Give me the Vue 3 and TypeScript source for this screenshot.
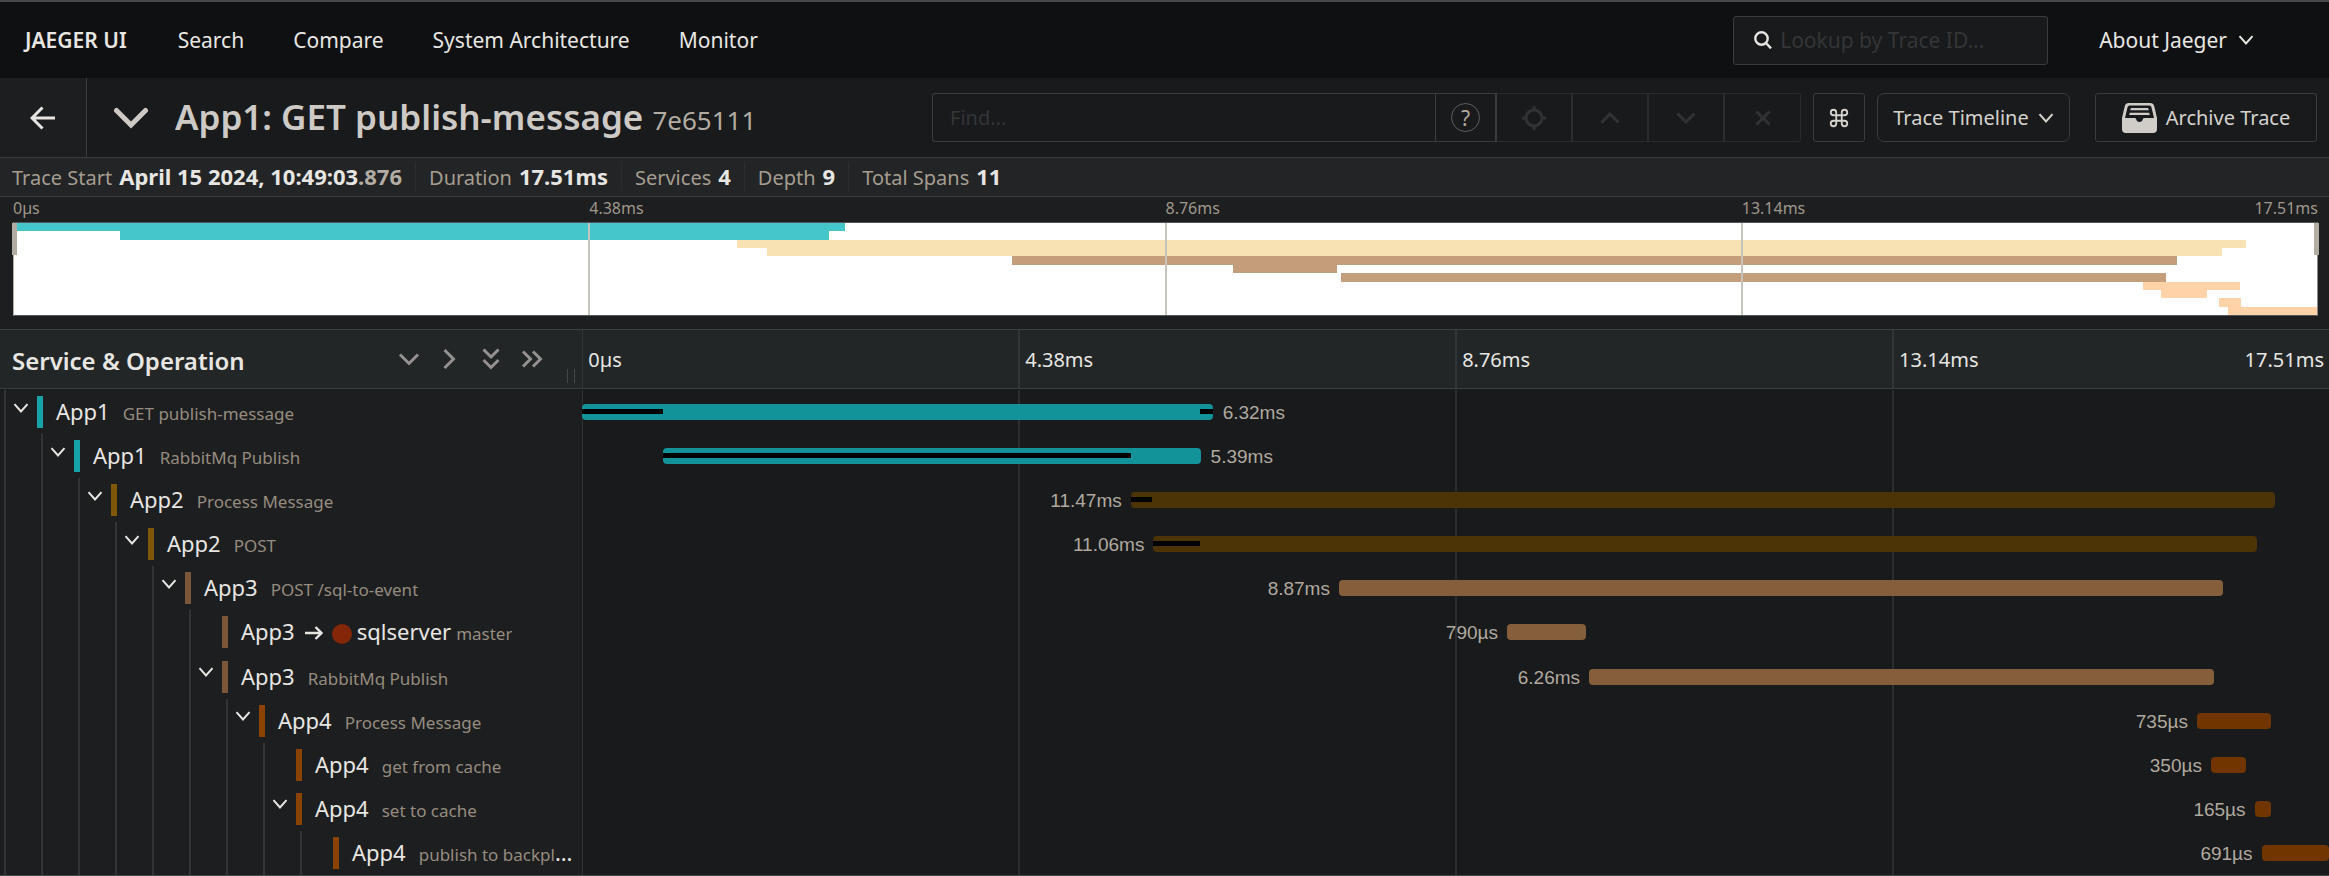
<script setup lang="ts">
interface Span {
  service: string
  operation: string
  depth: number
  hasChildren: boolean
  tone: 'teal' | 'gold' | 'tan' | 'rust'
  start: number
  width: number
  duration: string
  labelSide: 'left' | 'right'
  peer?: string
  critical: { start: number; width: number }[]
}

const menu = ['Search', 'Compare', 'System Architecture', 'Monitor']
const ticks = ['0µs', '4.38ms', '8.76ms', '13.14ms']
const total = '17.51ms'

const summary = [
  { label: 'Duration', value: '17.51ms' },
  { label: 'Services', value: '4' },
  { label: 'Depth', value: '9' },
  { label: 'Total Spans', value: '11' },
]

const spans: Span[] = [
  { service: 'App1', operation: 'GET publish-message', depth: 0, hasChildren: true, tone: 'teal', start: 0, width: 36.09, duration: '6.32ms', labelSide: 'right', critical: [{ start: 0, width: 4.6 }, { start: 35.35, width: 0.74 }] },
  { service: 'App1', operation: 'RabbitMq Publish', depth: 1, hasChildren: true, tone: 'teal', start: 4.6, width: 30.8, duration: '5.39ms', labelSide: 'right', critical: [{ start: 4.6, width: 26.8 }] },
  { service: 'App2', operation: 'Process Message', depth: 2, hasChildren: true, tone: 'gold', start: 31.4, width: 65.5, duration: '11.47ms', labelSide: 'left', critical: [{ start: 31.4, width: 1.24 }] },
  { service: 'App2', operation: 'POST', depth: 3, hasChildren: true, tone: 'gold', start: 32.7, width: 63.16, duration: '11.06ms', labelSide: 'left', critical: [{ start: 32.65, width: 2.7 }] },
  { service: 'App3', operation: 'POST /sql-to-event', depth: 4, hasChildren: true, tone: 'tan', start: 43.32, width: 50.6, duration: '8.87ms', labelSide: 'left', critical: [] },
  { service: 'App3', operation: 'master', depth: 5, hasChildren: false, tone: 'tan', start: 52.94, width: 4.51, duration: '790µs', labelSide: 'left', peer: 'sqlserver', critical: [] },
  { service: 'App3', operation: 'RabbitMq Publish', depth: 5, hasChildren: true, tone: 'tan', start: 57.64, width: 35.8, duration: '6.26ms', labelSide: 'left', critical: [] },
  { service: 'App4', operation: 'Process Message', depth: 6, hasChildren: true, tone: 'rust', start: 92.44, width: 4.22, duration: '735µs', labelSide: 'left', critical: [] },
  { service: 'App4', operation: 'get from cache', depth: 7, hasChildren: false, tone: 'rust', start: 93.24, width: 2, duration: '350µs', labelSide: 'left', critical: [] },
  { service: 'App4', operation: 'set to cache', depth: 7, hasChildren: true, tone: 'rust', start: 95.74, width: 0.94, duration: '165µs', labelSide: 'left', critical: [] },
  { service: 'App4', operation: 'publish to backplane', depth: 8, hasChildren: false, tone: 'rust', start: 96.14, width: 3.86, duration: '691µs', labelSide: 'left', critical: [] },
]

const pct = (n: number) => `${n}%`
</script>

<template>
  <div class="page">
    <nav class="nav" aria-label="Main">
      <a class="brand" href="#">JAEGER UI</a>
      <a v-for="item in menu" :key="item" href="#">{{ item }}</a>
      <label class="lookup">
        <svg class="i18" viewBox="0 0 18 18" aria-hidden="true"><circle cx="7.5" cy="7.5" r="6.2" /><path d="M12 12l5 5.4" /></svg>
        <input type="text" placeholder="Lookup by Trace ID..." aria-label="Lookup by Trace ID" />
      </label>
      <button class="about" type="button">
        About Jaeger
        <svg class="chev" viewBox="0 0 16 10" aria-hidden="true"><path d="M1.5 1.2L8 8.4l6.5-7.2" /></svg>
      </button>
    </nav>

    <header class="title-bar">
      <a class="back" href="#" aria-label="Back">
        <svg viewBox="0 0 26 24" aria-hidden="true"><path d="M12.5 1.5L2 12l10.5 10.5M2 12h23" /></svg>
      </a>
      <button class="collapse" type="button" aria-label="Toggle details">
        <svg viewBox="0 0 36 22" aria-hidden="true"><path d="M3.5 3.5L18 18 32.5 3.5" /></svg>
      </button>
      <h1>App1: GET publish-message <small>7e65111</small></h1>

      <div class="find">
        <input type="text" placeholder="Find..." aria-label="Find" />
        <button class="help" type="button" aria-label="Search help"><span>?</span></button>
        <button type="button" disabled aria-label="Locate">
          <svg class="i24" viewBox="0 0 24 24" aria-hidden="true"><circle cx="12" cy="12" r="8" /><path d="M12 0v4M12 20v4M0 12h4M20 12h4" /></svg>
        </button>
        <button type="button" disabled aria-label="Previous">
          <svg class="i20" viewBox="0 0 20 12" aria-hidden="true"><path d="M1.5 10.5L10 2l8.5 8.5" /></svg>
        </button>
        <button type="button" disabled aria-label="Next">
          <svg class="i20" viewBox="0 0 20 12" aria-hidden="true"><path d="M1.5 1.5L10 10l8.5-8.5" /></svg>
        </button>
        <button type="button" disabled aria-label="Clear">
          <svg class="i16" viewBox="0 0 16 16" aria-hidden="true"><path d="M1.5 1.5l13 13M14.5 1.5l-13 13" /></svg>
        </button>
      </div>

      <button class="btn shortcut" type="button" aria-label="Keyboard shortcuts">
        <svg viewBox="0 0 24 24" aria-hidden="true"><path d="M15 6v12a3 3 0 1 0 3-3H6a3 3 0 1 0 3 3V6a3 3 0 1 0-3 3h12a3 3 0 1 0-3-3" /></svg>
      </button>
      <button class="btn view" type="button">
        Trace Timeline
        <svg class="chev" viewBox="0 0 16 10" aria-hidden="true"><path d="M1.5 1.2L8 8.4l6.5-7.2" /></svg>
      </button>
      <button class="btn archive" type="button">
        <svg viewBox="0 0 35 30" aria-hidden="true">
          <path class="solid" fill-rule="evenodd" d="M7 0h21q3.5 0 4.2 3L35 15v11q0 4-4 4H4q-4 0-4-4V15L2.8 3Q3.5 0 7 0zM7.5 2.500q-1.500 0-1.900 1.500L3 15h10q.8 0 1 1 .8 3 3.500 3t3.500-3q.2-1 1-1h10L29.400 4q-.4-1.500-1.900-1.500z" />
          <path class="solid" d="M9 5h17l.8 2.200H8.200zM7.800 9.800h19.400l.6 2.200H7.200z" />
        </svg>
        Archive Trace
      </button>
    </header>

    <dl class="summary">
      <div class="stat">
        <dt>Trace Start</dt>
        <dd>April 15 2024, 10:49:03<span>.876</span></dd>
      </div>
      <div v-for="s in summary" :key="s.label" class="stat">
        <dt>{{ s.label }}</dt>
        <dd>{{ s.value }}</dd>
      </div>
    </dl>

    <section class="minimap" aria-label="Trace overview">
      <div class="mini-ticks">
        <span v-for="t in ticks" :key="t">{{ t }}</span>
        <span class="end">{{ total }}</span>
      </div>
      <div class="mini-canvas">
        <div class="mini-rows">
          <div v-for="(s, i) in spans" :key="i" class="mini-row">
            <div class="mini-bar" :class="s.tone" :style="{ marginLeft: pct(s.start), width: pct(s.width) }"></div>
          </div>
        </div>
        <div class="mini-grid"><i v-for="t in ticks" :key="t"></i></div>
        <b class="handle left"></b>
        <b class="handle right"></b>
      </div>
    </section>

    <div class="head">
      <div class="head-name">
        <h2>Service &amp; Operation</h2>
        <div class="tools">
          <button type="button" aria-label="Expand one level"><svg viewBox="0 0 24 24" aria-hidden="true"><path d="M3 7.5l9 9 9-9" /></svg></button>
          <button type="button" aria-label="Collapse one level"><svg viewBox="0 0 24 24" aria-hidden="true"><path d="M6.5 3l9 9-9 9" /></svg></button>
          <button type="button" aria-label="Expand all"><svg viewBox="0 0 24 24" aria-hidden="true"><path d="M4.5 2.5L12 10l7.5-7.5M4.5 13l7.5 7.5 7.5-7.5" /></svg></button>
          <button type="button" aria-label="Collapse all"><svg viewBox="0 0 24 24" aria-hidden="true"><path d="M3 4.5l7.5 7.5L3 19.5M13 4.5l7.5 7.5-7.5 7.5" /></svg></button>
        </div>
        <div class="grip"></div>
      </div>
      <div class="head-ticks">
        <span v-for="t in ticks" :key="t" class="tick">{{ t }}</span>
        <span class="end">{{ total }}</span>
      </div>
    </div>

    <main class="rows">
      <div v-for="(s, i) in spans" :key="i" class="row">
        <div class="name">
          <i v-for="d in s.depth" :key="d" class="guide"></i>
          <button v-if="s.hasChildren" class="guide own" type="button" aria-label="Toggle children">
            <svg class="chev" viewBox="0 0 16 10" aria-hidden="true"><path d="M1.5 1.2L8 8.4l6.5-7.2" /></svg>
          </button>
          <i v-else class="guide own"></i>
          <a class="label" :class="s.tone" href="#">
            <span>{{ s.service }}</span>
            <template v-if="s.peer">
              <svg class="arrow" viewBox="0 0 18 14" aria-hidden="true"><path d="M0 7h16M10.5 1l6 6-6 6" /></svg>
              <span class="dot"></span>
              <span>{{ s.peer }}</span>
            </template>
            <small :class="{ near: s.peer }">{{ s.operation }}</small>
          </a>
        </div>
        <div class="lane">
          <i v-for="t in ticks" :key="t" class="cell"></i>
          <div class="bar" :class="[s.tone, s.labelSide]" :style="{ left: pct(s.start), width: pct(s.width) }">
            <span>{{ s.duration }}</span>
          </div>
          <div v-for="(c, k) in s.critical" :key="k" class="critical" :style="{ left: pct(c.start), width: pct(c.width) }"></div>
        </div>
      </div>
    </main>
  </div>
</template>

<style>
html,
body {
  margin: 0;
  background: #191a1c;
}
</style>

<style scoped>
.page {
  box-sizing: border-box;
  display: flex;
  flex-direction: column;
  min-height: 100vh;
  border-top: 2px solid #48494b;
  border-bottom: 1px solid #48494b;
  background: #191a1c;
  color: #e8e6e3;
  font-family: "Noto Sans", "Open Sans", sans-serif;
  font-size: 20px;
  white-space: nowrap;
}
.page *,
.page *::before {
  box-sizing: border-box;
}
a {
  color: inherit;
  text-decoration: none;
}
button,
input {
  margin: 0;
  padding: 0;
  border: 0;
  border-radius: 0;
  background: none;
  color: inherit;
  font: inherit;
  white-space: nowrap;
}
input::placeholder {
  color: #343537;
  opacity: 1;
}
svg {
  display: block;
  flex: none;
  fill: none;
  stroke: currentColor;
  stroke-width: 2;
}
.chev {
  width: 16px;
  height: 10px;
}
.i16 {
  width: 16px;
  height: 16px;
  stroke-width: 3;
}
.i18 {
  width: 18px;
  height: 18px;
  stroke-width: 2.4;
}
.i20 {
  width: 20px;
  height: 12px;
  stroke-width: 3;
}
.i24 {
  width: 24px;
  height: 24px;
  stroke-width: 3;
}

/* navigation */
.nav {
  display: flex;
  align-items: center;
  gap: 49px;
  height: 76px;
  padding: 0 75px 0 25px;
  background: #0f1011;
  font-size: 21px;
}
.brand {
  margin-right: 2px;
  font-weight: 600;
}
.lookup {
  display: flex;
  align-items: center;
  gap: 8px;
  width: 315px;
  height: 49px;
  margin: 0 2px 0 auto;
  padding: 0 20px;
  border: 1px solid #3a3c3f;
  border-radius: 3px;
  background: #191a1c;
}
.lookup input {
  flex: 1;
  min-width: 0;
  outline: 0;
}
.about {
  display: flex;
  align-items: center;
  gap: 11px;
}

/* title bar */
.title-bar {
  display: flex;
  align-items: center;
  height: 80px;
  padding-right: 12px;
  border-bottom: 1px solid #3a3c3e;
}
.back {
  display: flex;
  align-items: center;
  justify-content: center;
  align-self: stretch;
  width: 87px;
  border-right: 1px solid #3a3c3e;
  background: #1d1e20;
}
.back svg {
  width: 26px;
  height: 24px;
  stroke-width: 3;
}
.collapse {
  margin: 0 26px;
  color: #cdcac6;
}
.collapse svg {
  width: 36px;
  height: 22px;
  stroke-width: 5;
  stroke-linecap: round;
}
h1 {
  flex: 1;
  min-width: 0;
  margin: 0;
  padding-bottom: 3px;
  overflow: hidden;
  color: #cdcac6;
  font-size: 35px;
  font-weight: 600;
  text-overflow: ellipsis;
}
h1 small {
  color: #b2aca2;
  font-size: 26px;
  font-weight: 400;
}
.find {
  display: flex;
  flex: 0 1 869px;
  height: 49px;
}
.find input {
  flex: 1;
  min-width: 0;
  padding: 0 17px;
  border: 1px solid #3a3c3f;
  border-right: 0;
  border-radius: 3px 0 0 3px;
  outline: 0;
}
.find button {
  display: flex;
  align-items: center;
  justify-content: center;
  width: 76px;
  border: 1px solid #2a2b2d;
  border-left: 0;
  border-right-width: 2px;
  color: #303234;
}
.find button:last-child {
  border-right-width: 1px;
  border-radius: 0 3px 3px 0;
}
.find .help {
  width: 62px;
  border: 1px solid #3a3c3f;
  border-right-width: 2px;
  color: #b2a99d;
}
.help span {
  display: flex;
  align-items: center;
  justify-content: center;
  width: 29px;
  height: 29px;
  border: 1px solid #5c5e60;
  border-radius: 50%;
  font-size: 21px;
}
.btn {
  display: flex;
  align-items: center;
  justify-content: center;
  height: 49px;
  border: 1px solid #3a3c3f;
  border-radius: 3px;
  color: #d5d2cd;
}
.shortcut {
  width: 52px;
  margin-left: 12px;
}
.shortcut svg {
  width: 22px;
  height: 22px;
}
.view {
  gap: 9px;
  width: 193px;
  margin-left: 12px;
  border-radius: 7px;
}
.archive {
  gap: 9px;
  width: 222px;
  margin-left: 25px;
}
.archive svg {
  width: 35px;
  height: 30px;
  stroke: none;
}
.solid {
  fill: #d0cdc9;
}

/* summary */
.summary {
  display: flex;
  align-items: center;
  height: 39px;
  margin: 0;
  padding: 0 0 2px 12px;
  border-bottom: 1px solid #3a3c3e;
  background: #222425;
}
.stat {
  display: flex;
  align-items: baseline;
  gap: 7px;
}
.stat + .stat {
  margin-left: 13px;
  padding-left: 13px;
  border-left: 1px solid #2b2d2e;
}
dt {
  color: #a59d91;
}
dd {
  margin: 0;
  font-size: 22px;
  font-weight: 700;
  line-height: 28px;
}
dd span {
  color: #b4ada3;
}

/* minimap */
.minimap {
  padding: 0 11px 13px 13px;
  background: #1d1e20;
}
.mini-ticks {
  display: flex;
  height: 25px;
  color: #9f978b;
  font-size: 16px;
  line-height: 23px;
}
.mini-ticks span {
  flex: 1 0 0;
}
.mini-ticks .end {
  display: flex;
  flex: none;
  justify-content: flex-end;
  width: 0;
}
.mini-canvas {
  position: relative;
  height: 94px;
  border: 1px solid #55585a;
  border-left-color: #b3aca2;
  border-right-color: #8d8880;
  background: #fff;
}
.mini-rows {
  display: flex;
  flex-direction: column;
  height: 100%;
}
.mini-row {
  flex: 1;
}
.mini-bar {
  height: 100%;
}
.mini-bar.teal {
  background: #44c6cb;
}
.mini-bar.gold {
  background: #f8e1b2;
}
.mini-bar.tan {
  background: #c49e7b;
}
.mini-bar.rust {
  background: #ffd2a8;
}
.mini-grid {
  position: absolute;
  inset: 0;
  display: flex;
}
.mini-grid i {
  flex: 1;
}
.mini-grid i + i {
  border-left: 2px solid #c6c2bc;
}
.handle {
  position: absolute;
  top: 0;
  width: 5px;
  height: 32px;
  background: #b3aca2;
}
.handle.left {
  left: -2px;
}
.handle.right {
  right: -2px;
}

/* timeline header */
.head {
  display: flex;
  height: 60px;
  border-top: 1px solid #3b4042;
  border-bottom: 1px solid #3b4042;
  background: #222627;
}
.head-name {
  display: flex;
  align-items: center;
  width: 25%;
  padding-left: 12px;
}
h2 {
  flex: 1;
  min-width: 0;
  margin: 0;
  padding-top: 2px;
  overflow: hidden;
  font-size: 24px;
  font-weight: 600;
}
.tools {
  display: flex;
  gap: 17px;
  color: #949290;
}
.tools svg {
  width: 24px;
  height: 24px;
  stroke-width: 3;
}
.grip {
  align-self: flex-end;
  width: 8px;
  height: 14px;
  margin: 0 7px 5px 23px;
  border: 1px solid #43484a;
  border-width: 0 1px;
}
.head-ticks {
  display: flex;
  flex: 1;
  line-height: 60px;
}
.tick {
  flex: 1 0 0;
  height: 58px;
  padding-left: 5px;
  border-left: 1px solid #303537;
}
.tick + .tick {
  border-left-width: 2px;
}
.head-ticks .end {
  display: flex;
  flex: none;
  justify-content: flex-end;
  width: 5px;
  height: 58px;
  margin-left: -5px;
  padding-right: 5px;
}

/* span rows */
.rows {
  display: grid;
  flex: 1;
  grid-auto-rows: minmax(44px, 1fr);
  padding-top: 1px;
}
.row {
  display: flex;
}
.name {
  display: flex;
  align-items: stretch;
  width: 25%;
  padding: 0 6px 0 4px;
  overflow: hidden;
  background: #1d1e20;
}
.guide {
  flex: none;
  width: 37px;
  border-left: 2px solid #323436;
}
.guide.own {
  width: 33px;
  padding: 0 0 9px 7px;
}
.label {
  align-self: center;
  min-width: 0;
  height: 32px;
  padding-left: 13px;
  overflow: hidden;
  border-left: 6px solid;
  font-size: 22px;
  line-height: 31px;
  text-overflow: ellipsis;
}
.label.teal {
  border-color: #17a2a8;
}
.label.gold {
  border-color: #7e570a;
}
.label.tan {
  border-color: #7b5638;
}
.label.rust {
  border-color: #8a4300;
}
.label small {
  margin-left: 13px;
  color: #958c7f;
  font-size: 17px;
}
.label small.near {
  margin-left: 5px;
}
.label .arrow {
  display: inline-block;
  width: 18px;
  height: 14px;
  margin: 0 9px 0 10px;
  stroke-width: 2.4;
}
.label .dot {
  display: inline-block;
  width: 20px;
  height: 20px;
  margin-right: 5px;
  border-radius: 50%;
  background: #842608;
  vertical-align: -4px;
}
.lane {
  position: relative;
  display: flex;
  flex: 1;
  overflow: hidden;
}
.cell {
  flex: 1;
  border-left: 2px solid #2b2d2f;
}
.cell:first-child {
  border-left: 1px solid #303335;
}
.bar {
  position: absolute;
  top: 14px;
  height: 16px;
  border-radius: 4px;
}
.bar.teal {
  background: #129399;
}
.bar.gold {
  background: #4c3407;
}
.bar.tan {
  background: #855e3b;
}
.bar.rust {
  background: #713600;
}
.bar span {
  position: absolute;
  top: 0;
  color: #b0a99f;
  font-family: "Liberation Sans", Arial, sans-serif;
  font-size: 19px;
  line-height: 17px;
}
.bar.left span {
  right: 100%;
  margin-right: 9px;
}
.bar.right span {
  left: 100%;
  margin-left: 10px;
}
.critical {
  position: absolute;
  top: 19px;
  height: 5px;
  background: #000;
}
</style>
